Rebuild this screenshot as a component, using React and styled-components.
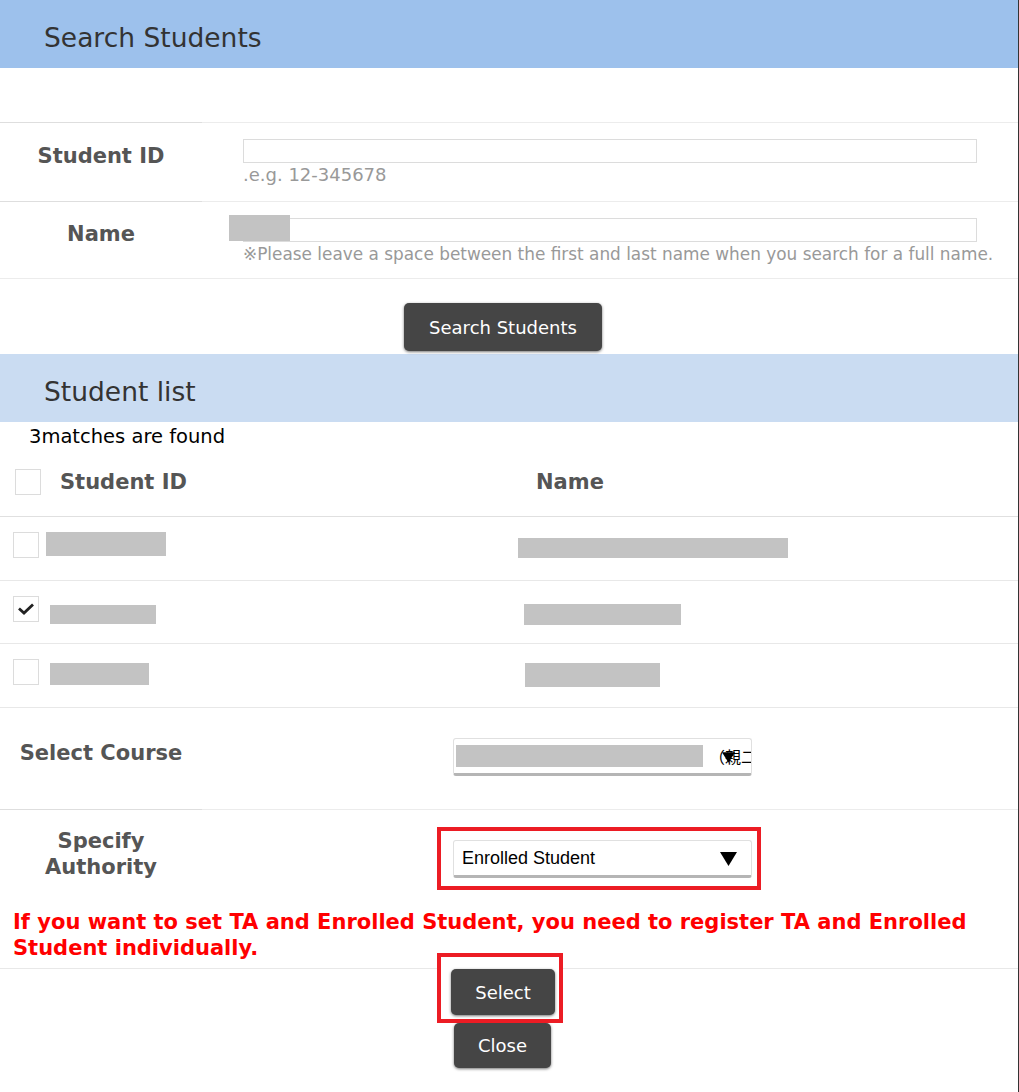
import styled, { createGlobalStyle } from "styled-components";

const GlobalStyle = createGlobalStyle`
  body {
    margin: 0;
    background: #fff;
    font-family: "DejaVu Sans", Verdana, sans-serif;
  }
`;

const students = [
  { h: 64, id: 120, idTop: 0, idH: 24, idGap: 7, name: 270, nameTop: 5, nameH: 20, nameLeft: 0, checked: false },
  { h: 63, id: 106, idTop: 9, idH: 19, idGap: 11, name: 157, nameTop: 7, nameH: 21, nameLeft: 6, checked: true },
  { h: 64, id: 99, idTop: 4, idH: 22, idGap: 11, name: 135, nameTop: 3, nameH: 24, nameLeft: 7, checked: false },
];

const Checkbox = ({ checked }) => (
  <Box>
    {checked && (
      <svg width="18" height="14" viewBox="0 0 18 14">
        <polyline points="2,6.5 7,11 16,2.5" fill="none" stroke="#222" strokeWidth="2.8" />
      </svg>
    )}
  </Box>
);

const Triangle = ({ w, h }) => (
  <svg width={w} height={h} viewBox="0 0 17 14">
    <polygon points="0,0 17,0 8.5,14" fill="#000" />
  </svg>
);

const App = () => {
  return (
    <Page>
      <GlobalStyle />
      <Band $tone="#9dc1ec">Search Students</Band>
      <Spacer />

      <FormRow $h="79px">
        <Label>Student ID</Label>
        <Field>
          <TextInput />
          <Hint $size="18px">.e.g. 12-345678</Hint>
        </Field>
      </FormRow>
      <FormRow $h="77px">
        <Label>Name</Label>
        <Field>
          <InputWrap>
            <TextInput />
            <NameMask />
          </InputWrap>
          <Hint $size="16.9px">
            ※Please leave a space between the first and last name when you search for a full name.
          </Hint>
        </Field>
      </FormRow>

      <SearchArea>
        <DarkButton $w="198px" $h="48px">Search Students</DarkButton>
      </SearchArea>

      <Band $tone="#cadcf2">Student list</Band>
      <Matches>3matches are found</Matches>

      <TableHead>
        <IdCell $head>
          <Checkbox />
          <HeadText>Student ID</HeadText>
        </IdCell>
        <NameCell $head>
          <HeadText $flush>Name</HeadText>
        </NameCell>
      </TableHead>

      {students.map((s, i) => (
        <TableRow key={i} $h={s.h}>
          <IdCell>
            <Checkbox checked={s.checked} />
            <Redacted $w={s.id} $h={s.idH} $top={s.idTop} $left={s.idGap} />
          </IdCell>
          <NameCell>
            <Redacted $w={s.name} $h={s.nameH} $top={s.nameTop} $left={s.nameLeft} />
          </NameCell>
        </TableRow>
      ))}

      <CourseRow>
        <Label>Select Course</Label>
        <CourseField>
          <SelectBox>
            <Redacted $w={247} $h={22} $top={0} $left={0} />
            <CourseText>（親二</CourseText>
            <SmallArrow>
              <Triangle w={13} h={11} />
            </SmallArrow>
          </SelectBox>
        </CourseField>
      </CourseRow>

      <AuthorityRow>
        <Label>
          Specify
          <br />
          Authority
        </Label>
        <AuthorityField>
          <Highlight $pad="9px 5px 8px 12px">
            <SelectBox $plain>
              <SelectText>Enrolled Student</SelectText>
              <BigArrow>
                <Triangle w={17} h={14} />
              </BigArrow>
            </SelectBox>
          </Highlight>
        </AuthorityField>
      </AuthorityRow>

      <Warning>
        If you want to set TA and Enrolled Student, you need to register TA and Enrolled Student
        individually.
      </Warning>

      <ActionArea>
        <Highlight $pad="12px 4px 4px 10px" $overlap>
          <DarkButton $w="104px" $h="46px">Select</DarkButton>
        </Highlight>
        <DarkButton $w="97px" $h="45px" $shift="5px">Close</DarkButton>
      </ActionArea>
    </Page>
  );
};

export default App;

const Page = styled.div`
  width: 1018px;
  min-height: 1092px;
  border-right: 1px solid #333;
  box-sizing: content-box;
  background: #fff;
`;

const Band = styled.h2`
  margin: 0;
  height: 68px;
  box-sizing: border-box;
  display: flex;
  align-items: center;
  padding: 6px 0 0 44px;
  background: ${(p) => p.$tone};
  color: #333;
  font-size: 26.5px;
  font-weight: normal;
`;

const Spacer = styled.div`
  height: 54px;
`;

const FormRow = styled.div`
  display: grid;
  grid-template-columns: 202px 1fr;
  height: ${(p) => p.$h};
  border-top: 1px solid #ececec;
  box-sizing: border-box;
`;

const Label = styled.div`
  display: flex;
  align-items: center;
  justify-content: center;
  text-align: center;
  padding-bottom: 12px;
  color: #555;
  font-size: 21px;
  font-weight: bold;
  line-height: 26px;
  border-top: 1px solid #dedede;
  margin-top: -1px;
`;

const Field = styled.div`
  padding: 16px 0 0 41px;
`;

const InputWrap = styled.div`
  position: relative;
`;

const TextInput = styled.div`
  width: 734px;
  height: 24px;
  border: 1px solid #dcdcdc;
  box-sizing: border-box;
`;

const NameMask = styled.div`
  position: absolute;
  left: -14px;
  top: -3px;
  width: 61px;
  height: 26px;
  background: #c3c3c3;
`;

const Hint = styled.div`
  margin-top: 1px;
  color: #999;
  font-size: ${(p) => p.$size};
  line-height: 22px;
  white-space: nowrap;
`;

const SearchArea = styled.div`
  display: flex;
  justify-content: center;
  padding: 24px 12px 3px 0;
  border-top: 1px solid #ececec;
`;

const DarkButton = styled.button`
  width: ${(p) => p.$w};
  height: ${(p) => p.$h};
  margin-left: ${(p) => p.$shift || "0"};
  padding: 0;
  border: none;
  border-radius: 5px;
  background: #454545;
  color: #fff;
  font-family: "DejaVu Sans", Verdana, sans-serif;
  font-size: 18px;
  box-shadow: 0 1px 3px rgba(0, 0, 0, 0.55);
`;

const Matches = styled.div`
  padding: 2px 0 0 29px;
  height: 28px;
  box-sizing: border-box;
  font-size: 19.5px;
  line-height: 26px;
  color: #000;
`;

const TableHead = styled.div`
  display: grid;
  grid-template-columns: 518px 1fr;
  height: 67px;
  align-items: center;
  border-bottom: 1px solid #e0e0e0;
  box-sizing: border-box;
`;

const TableRow = styled.div`
  display: grid;
  grid-template-columns: 518px 1fr;
  height: ${(p) => p.$h}px;
  border-bottom: 1px solid #e8e8e8;
  box-sizing: border-box;
`;

const IdCell = styled.div`
  display: flex;
  align-items: ${(p) => (p.$head ? "center" : "flex-start")};
  padding: ${(p) => (p.$head ? "0 0 2px 15px" : "15px 0 0 13px")};
`;

const NameCell = styled.div`
  display: flex;
  align-items: ${(p) => (p.$head ? "center" : "flex-start")};
  padding: ${(p) => (p.$head ? "0 0 2px 18px" : "16px 0 0 0")};
`;

const HeadText = styled.span`
  margin-left: ${(p) => (p.$flush ? "0" : "19px")};
  color: #555;
  font-size: 21px;
  font-weight: bold;
`;

const Box = styled.span`
  width: 26px;
  height: 26px;
  flex: none;
  display: flex;
  align-items: center;
  justify-content: center;
  border: 1px solid #dcdcdc;
  box-sizing: border-box;
  background: #fff;
`;

const Redacted = styled.span`
  display: block;
  flex: none;
  width: ${(p) => p.$w}px;
  height: ${(p) => p.$h}px;
  margin-top: ${(p) => p.$top}px;
  margin-left: ${(p) => p.$left}px;
  background: #c3c3c3;
`;

const CourseRow = styled.div`
  display: grid;
  grid-template-columns: 202px 1fr;
  height: 101px;
  box-sizing: border-box;
  & > ${Label} {
    border-top: none;
    margin-top: 0;
    padding-bottom: 12px;
  }
`;

const CourseField = styled.div`
  padding: 30px 0 0 251px;
`;

const SelectBox = styled.div`
  position: relative;
  width: 299px;
  height: 38px;
  display: flex;
  align-items: center;
  padding: ${(p) => (p.$plain ? "0 0 0 8px" : "0 0 0 2px")};
  box-sizing: border-box;
  overflow: hidden;
  border: 1px solid #e0e0e0;
  border-bottom: 3px solid #b5b5b5;
  border-radius: 3px;
  background: #fff;
  font-family: "Liberation Sans", Arial, "Noto Sans CJK JP", sans-serif;
`;

const CourseText = styled.span`
  margin-left: 6px;
  font-size: 16px;
  white-space: nowrap;
  font-family: "Noto Sans CJK JP", sans-serif;
`;

const SmallArrow = styled.span`
  position: absolute;
  left: 268px;
  top: 13px;
  z-index: 1;
  line-height: 0;
`;

const AuthorityRow = styled.div`
  display: grid;
  grid-template-columns: 202px 1fr;
  height: 92px;
  border-top: 1px solid #ececec;
  box-sizing: border-box;
  & > ${Label} {
    padding-bottom: 4px;
  }
`;

const AuthorityField = styled.div`
  padding: 17px 0 0 235px;
`;

const Highlight = styled.div`
  position: relative;
  display: inline-block;
  padding: ${(p) => p.$pad};
  border: 4px solid #ec1c24;
  background: #fff;
  margin-top: ${(p) => (p.$overlap ? "-16px" : "0")};
  line-height: 0;
`;

const SelectText = styled.span`
  font-size: 18px;
  line-height: 20px;
  color: #000;
`;

const BigArrow = styled.span`
  position: absolute;
  right: 14px;
  top: 11px;
  line-height: 0;
`;

const Warning = styled.p`
  margin: 0;
  padding: 8px 20px 7px 13px;
  color: #f00;
  font-size: 21px;
  font-weight: bold;
  line-height: 26px;
`;

const ActionArea = styled.div`
  display: flex;
  flex-direction: column;
  align-items: center;
  padding: 0 18px 20px 0;
  border-top: 1px solid #e8e8e8;
`;
